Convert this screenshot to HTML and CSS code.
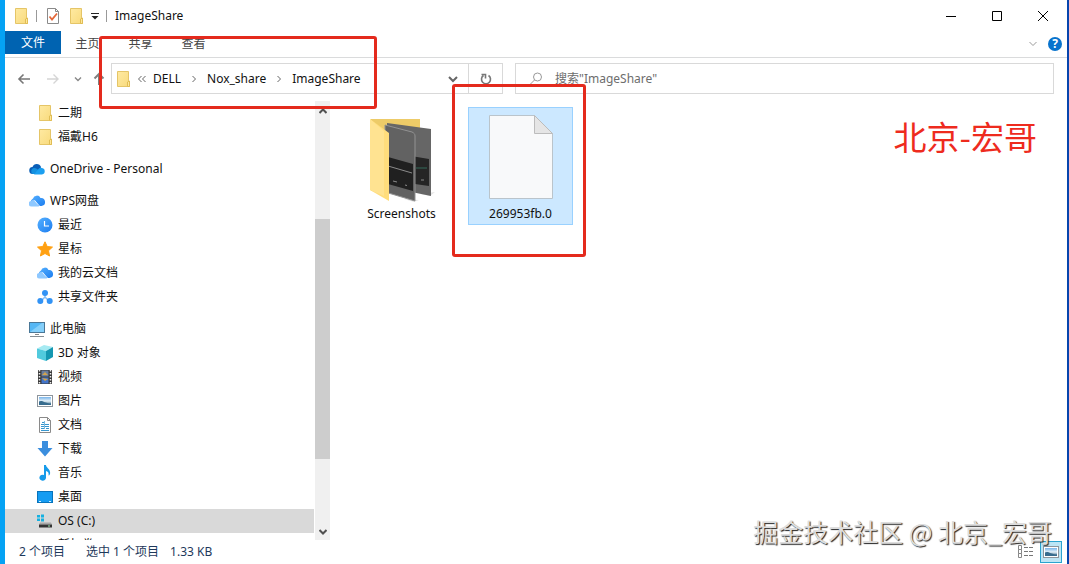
FILE: index.html
```html
<!DOCTYPE html>
<html lang="zh-CN">
<head>
  <meta charset="UTF-8" />
  <meta name="viewport" content="width=device-width, initial-scale=1" />
  <title>ImageShare</title>
  <link rel="stylesheet" href="styles.css">
</head>
<body>

  <!-- Shared icons -->
  <svg class="sprite" aria-hidden="true">
    <defs>
      <linearGradient id="folderFill" x1="0" y1="0" x2="1" y2="1">
        <stop offset="0" stop-color="#ffeaa2" />
        <stop offset="1" stop-color="#f8da7c" />
      </linearGradient>
      <linearGradient id="blueFill" x1="0" y1="0" x2="1" y2="1">
        <stop offset="0" stop-color="#55b0ff" />
        <stop offset="1" stop-color="#1c7df0" />
      </linearGradient>
      <linearGradient id="skyFill" x1="0" y1="0" x2="0" y2="1">
        <stop offset="0" stop-color="#78b4ea" />
        <stop offset="0.5" stop-color="#e4f1f8" />
        <stop offset="1" stop-color="#2c5f80" />
      </linearGradient>
    </defs>
    <symbol id="folder" viewBox="0 0 16 16">
      <path d="M2.500.500h11v10h1v5h-12z" fill="url(#folderFill)" stroke="#e5c567" />
      <path d="M12.500 15.500v-4.500l2-1v5.500z" fill="#ffe79a" stroke="#e0bd55" />
    </symbol>
    <symbol id="wpsCloud" viewBox="0 0 16 16">
      <path d="M5 13a4 4 0 0 1-1-7.500A4 4 0 0 1 11.500 5 4 4 0 0 1 12.500 13z" fill="url(#blueFill)" />
      <path d="M2.500 13.500a2.500 2.500 0 0 1 0-5.500 3 3 0 0 1 4-.500L10 13.500z" fill="#8ec8ff" />
      <path d="M5.500 7.500l5 5.500" stroke="#fff" stroke-width=".8" />
    </symbol>
    <symbol id="picture" viewBox="0 0 16 16">
      <rect x=".5" y="2.500" width="15" height="11" fill="#fff" stroke="#8d959c" />
      <rect x="2" y="4" width="12" height="8" fill="url(#skyFill)" />
      <path d="M2 8.500c3-2 5 1.500 12 2v1.500H2z" fill="#376c8e" />
    </symbol>
  </svg>

  <div class="window">
    <header class="titlebar">
      <svg class="icon"><use href="#folder" /></svg>
      <span class="divider"></span>
      <button class="plain" aria-label="属性">
        <svg class="icon" viewBox="0 0 16 16"><path d="M2.500.500h8l3 3v12h-11z" fill="#fff" stroke="#8a8a8a" /><path d="M10.500.500v3h3" fill="none" stroke="#8a8a8a" /><path d="M4.500 8.500l2.500 3 5-6" fill="none" stroke="#e4683a" stroke-width="1.800" /></svg>
      </button>
      <button class="plain" aria-label="新建文件夹"><svg class="icon"><use href="#folder" /></svg></button>
      <button class="plain" aria-label="自定义快速访问工具栏">
        <svg class="icon-small" viewBox="0 0 8 8"><path d="M0 1.500h8" stroke="#222" /><path d="M.5 4h7L4 7.500z" fill="#222" /></svg>
      </button>
      <span class="divider"></span>
      <h1 class="title">ImageShare</h1>
      <div class="window-buttons">
        <button class="plain" aria-label="最小化"><svg viewBox="0 0 10 10"><path d="M0 5.500h10" /></svg></button>
        <button class="plain" aria-label="最大化"><svg viewBox="0 0 10 10"><path d="M.5.500h9v9h-9z" /></svg></button>
        <button class="plain" aria-label="关闭"><svg viewBox="0 0 10 10"><path d="M0 0l10 10M10 0L0 10" /></svg></button>
      </div>
    </header>

    <nav class="ribbon">
      <button class="tab tab-file">文件</button>
      <button class="tab">主页</button>
      <button class="tab">共享</button>
      <button class="tab">查看</button>
      <div class="ribbon-end">
        <button class="plain" aria-label="展开功能区"><svg class="icon-small" viewBox="0 0 8 8"><path d="M.5 2L4 5.500 7.500 2" fill="none" stroke="#999" /></svg></button>
        <button class="help" aria-label="帮助">?</button>
      </div>
    </nav>

    <div class="addressbar">
      <div class="history">
        <button class="plain" aria-label="后退"><svg class="icon" viewBox="0 0 16 16"><path d="M14 8H3M7.500 3.500L3 8l4.500 4.500" fill="none" stroke="#777" stroke-width="1.600" /></svg></button>
        <button class="plain" aria-label="前进"><svg class="icon" viewBox="0 0 16 16"><path d="M2 8h11M8.500 3.500L13 8l-4.500 4.500" fill="none" stroke="#d5d5d5" stroke-width="1.400" /></svg></button>
        <button class="plain" aria-label="最近位置"><svg class="icon-small" viewBox="0 0 8 8"><path d="M1 2.500l3 3 3-3" fill="none" stroke="#888" stroke-width="1.400" /></svg></button>
        <button class="plain" aria-label="上移"><svg class="icon" viewBox="0 0 16 16"><path d="M8 14V3M3.500 7.500L8 3l4.500 4.500" fill="none" stroke="#808080" stroke-width="2" /></svg></button>
      </div>
      <div class="path">
        <svg class="icon"><use href="#folder" /></svg>
        <svg class="icon-path path-start" viewBox="0 0 10 10"><path d="M4.500 2l-3 3 3 3M8.500 2l-3 3 3 3" /></svg>
        <a href="#">DELL</a>
        <svg class="icon-path" viewBox="0 0 10 10"><path d="M3.500 2l3 3-3 3" /></svg>
        <a href="#">Nox_share</a>
        <svg class="icon-path" viewBox="0 0 10 10"><path d="M3.500 2l3 3-3 3" /></svg>
        <a href="#">ImageShare</a>
        <button class="plain path-more" aria-label="以前的位置"><svg class="icon-path" viewBox="0 0 10 10"><path d="M1 3l4 4 4-4" stroke-width="2" /></svg></button>
        <button class="plain refresh" aria-label="刷新"><svg class="icon" viewBox="0 0 16 16"><path d="M10.500 4.500A4.500 4.500 0 1 1 5.500 4.500M3.500 3.500h4v4" fill="none" stroke="#777" stroke-width="1.600" /></svg></button>
      </div>
      <label class="search">
        <svg class="icon" viewBox="0 0 16 16"><circle cx="9.500" cy="6" r="4" fill="none" stroke="#999" /><path d="M6.500 9L2 13.500" stroke="#999" /></svg>
        <input type="search" placeholder='搜索"ImageShare"' aria-label="搜索" />
      </label>
    </div>

    <main class="content">
      <aside class="sidebar">
        <ul class="tree">
          <li class="child"><a href="#"><svg class="icon"><use href="#folder" /></svg>二期</a></li>
          <li class="child"><a href="#"><svg class="icon"><use href="#folder" /></svg>福戴H6</a></li>
        </ul>
        <ul class="tree">
          <li><a href="#"><svg class="icon" viewBox="0 0 16 16"><path d="M4 13a3.500 3.500 0 0 1-.500-7A4.500 4.500 0 0 1 12 6l-2 7z" fill="#0a5fb8" /><path d="M3.500 13a3.500 3.500 0 0 1 1-6c2-.500 4 1 5 2l-1 4z" fill="#1490df" /><path d="M5 13.500l4.500-5.500a3.500 3.500 0 0 1 3.500-1 3.300 3.300 0 0 1 0 6.500z" fill="#1b9ff0" /></svg>OneDrive - Personal</a></li>
        </ul>
        <ul class="tree">
          <li><a href="#"><svg class="icon"><use href="#wpsCloud" /></svg>WPS网盘</a></li>
          <li class="child"><a href="#"><svg class="icon" viewBox="0 0 16 16"><circle cx="8" cy="8" r="7.500" fill="url(#blueFill)" /><path d="M7.500 4v5H12" fill="none" stroke="#fff" stroke-width="1.200" /></svg>最近</a></li>
          <li class="child"><a href="#"><svg class="icon" viewBox="0 0 16 16"><path d="M8 .8l2.200 4.700 5.300.6-4 3.600 1.100 5.300L8 12.500 3.400 15l1.100-5.300-4-3.600 5.300-.6z" fill="#ffa012" stroke="#ffa012" stroke-linejoin="round" /></svg>星标</a></li>
          <li class="child"><a href="#"><svg class="icon"><use href="#wpsCloud" /></svg>我的云文档</a></li>
          <li class="child"><a href="#"><svg class="icon" viewBox="0 0 16 16"><path d="M8 4v4l-4 4M8 8l4 4" fill="none" stroke="#84bdf5" stroke-width="1.500" /><circle cx="8" cy="4" r="3" fill="#3293f5" /><circle cx="3.300" cy="12" r="3" fill="#3293f5" /><circle cx="12.700" cy="12" r="3" fill="#3293f5" /></svg>共享文件夹</a></li>
        </ul>
        <ul class="tree">
          <li><a href="#"><svg class="icon" viewBox="0 0 16 16"><rect x=".5" y="1.500" width="15" height="10" fill="#55b7f5" stroke="#4a7797" /><path d="M1 11L13 2h2v9z" fill="#84cffa" /><path d="M6 13.500h4" stroke="#888" /><path d="M1 15.500h14" stroke="#858d93" /></svg>此电脑</a></li>
          <li class="child"><a href="#"><svg class="icon" viewBox="0 0 16 16"><path d="M0 3.500L7 0l9 2-7 4z" fill="#a6eaf2" /><path d="M0 3.500L9 6v10l-9-3z" fill="#51cadd" /><path d="M9 6l7-4v10l-7 4z" fill="#1597b1" /></svg>3D 对象</a></li>
          <li class="child"><a href="#"><svg class="icon" viewBox="0 0 16 16"><path d="M1 1h14v14H1z" fill="#393939" /><path d="M2.500 1v14M13.500 1v14" stroke="#eee" stroke-width="1.500" stroke-dasharray="1.500 1.500" /><path d="M4.500 1.500h7v6h-7z" fill="#687d9e" /><path d="M4.500 8.500h7v6h-7z" fill="#4374c8" /><path d="M5 6l3-3 3 3zM5 9l3 3 3-2z" fill="#d3a34a" /></svg>视频</a></li>
          <li class="child"><a href="#"><svg class="icon"><use href="#picture" /></svg>图片</a></li>
          <li class="child"><a href="#"><svg class="icon" viewBox="0 0 16 16"><path d="M2.500.500h8l3 3v12h-11z" fill="#fff" stroke="#8a8a8a" /><path d="M10.500.500v3h3" fill="none" stroke="#8a8a8a" /><path d="M5 5.500h3M4 7.500h8M4 9.500h8M4 11.500h3M9 11.500h3M4 13.500h8" stroke="#3897cf" /><path d="M7.500 4v8" stroke="#7abbe0" /></svg>文档</a></li>
          <li class="child"><a href="#"><svg class="icon" viewBox="0 0 16 16"><path d="M5 0h6v7h4.500L8 15.500.500 7H5z" fill="#3b8ede" /></svg>下载</a></li>
          <li class="child"><a href="#"><svg class="icon" viewBox="0 0 16 16"><path d="M7 0h2c0 3 5 4 4 9-.500 1-1 1.500-1.500 1.500C12 7.500 11 6.500 9 6v6.500a3.300 3 0 1 1-2-2.500z" fill="#169bea" /></svg>音乐</a></li>
          <li class="child"><a href="#"><svg class="icon" viewBox="0 0 16 16"><rect x=".5" y="2.500" width="15" height="11" fill="#159cf2" stroke="#0873bb" /><path d="M2 12.500h2M12 12.500h2" stroke="#d7f1ff" /></svg>桌面</a></li>
          <li class="child selected"><a href="#"><svg class="icon" viewBox="0 0 16 16"><path d="M0 2h3v2.500H0zM4 1.500h3v3H4zM0 5.500h3V8H0zM4 5.500h3v3H4z" fill="#16b1e1" /><path d="M3 9.500h11l1 2H2z" fill="#a7a7a7" /><path d="M2 11.500h13v3H2z" fill="#343434" /><path d="M11 13h2" stroke="#9ce8ae" /></svg>OS (C:)</a></li>
          <li class="child"><a href="#"><svg class="icon"></svg>新加卷 (D:)</a></li>
        </ul>
      </aside>
      <div class="scrollbar">
        <svg class="icon-small" viewBox="0 0 8 8"><path d="M.5 6L4 2.500 7.500 6" /></svg>
        <div class="thumb"></div>
        <svg class="icon-small" viewBox="0 0 8 8"><path d="M.5 2L4 5.500 7.500 2" /></svg>
      </div>

      <section class="files">
        <a class="file" href="#">
          <svg class="thumbnail" viewBox="0 0 84 87">
            <path d="M11 4h49v72H11z" fill="#edcb68" />
            <path d="M60 79l15-2-5 4zM44 84l15 1-5 2z" fill="#e6e6e6" />
            <path d="M27 8l44 6v67l-44-9z" fill="#666" />
            <path d="M27 37l42 7v27l-42-6z" fill="#252525" />
            <path d="M56 53h11" stroke="#356a5b" />
            <path d="M25 10l27 7c2 1 3 2 3 4v65l-30-9z" fill="#626262" stroke="#929292" />
            <path d="M28 42l25 7v27l-25-7z" fill="#202020" />
            <path d="M28 51l24 7M33 66l4 1M45 70l2 .500M61 65h3" stroke="#8a8a8a" />
            <path d="M10 4l19 14v68L10 75z" fill="#ffdd7c" />
            <path d="M10 4l14 12v65L10 75z" fill="#ffe391" />
          </svg>
          <span>Screenshots</span>
        </a>
        <a class="file file-selected" href="#">
          <svg class="thumbnail" viewBox="0 0 84 87">
            <path d="M10.500.500h45l18 18v65h-63z" fill="#f8f9fa" stroke="#bac4cb" />
            <path d="M55.500.500v18h18z" fill="#e5e5e5" stroke="#bcbcbc" />
          </svg>
          <span>269953fb.0</span>
        </a>
      </section>
    </main>

    <footer class="status">
      <span>2 个项目</span>
      <span>选中 1 个项目</span>
      <span>1.33 KB</span>
      <div class="views">
        <button class="plain" aria-label="详细信息"><svg class="icon" viewBox="0 0 16 16"><path d="M.5 1.500h3v4h-3zM.5 5.500h3v4h-3zM.5 9.500h3v4h-3z" fill="#fff" stroke="#888" /><path d="M6 3.500h4M11 3.500h4M6 7.500h4M11 7.500h4M6 11.500h4M11 11.500h4" stroke="#777" /></svg></button>
        <button class="plain view-active" aria-label="大图标"><svg class="icon"><use href="#picture" /></svg></button>
      </div>
    </footer>
  </div>

  <!-- Annotations over the window -->
  <div class="mark mark-path"></div>
  <div class="mark mark-file"></div>
  <p class="note">北京-宏哥</p>
  <p class="watermark">掘金技术社区 @ 北京_宏哥</p>

</body>
</html>
```
FILE: styles.css
```css
* {
  box-sizing: border-box;
}

body {
  position: relative;
  margin: 0;
  background-color: #fff;
  color: #111;
  font-family: "Noto Sans", "Noto Sans CJK SC", sans-serif;
  font-size: 12px;
  line-height: 24px;
}

button,
input {
  font: inherit;
  color: inherit;
}

a {
  color: inherit;
  text-decoration: none;
}

.sprite {
  position: absolute;
  width: 0;
  height: 0;
}

.window {
  display: flex;
  flex-direction: column;
  height: 100vh;
  border-left: 5px solid #05a2f4;
  border-right: 2px solid #0745ad;
}

.plain {
  display: flex;
  align-items: center;
  justify-content: center;
  padding: 0;
  border: none;
  background: none;
}

.icon {
  flex: none;
  width: 16px;
  height: 16px;
}

.icon-small {
  flex: none;
  width: 8px;
  height: 8px;
}

/* Title bar */
.titlebar {
  display: flex;
  flex: none;
  align-items: center;
  gap: 7px;
  height: 31px;
  padding-left: 8px;
}

.divider {
  width: 1px;
  height: 12px;
  margin-right: 1px;
  background-color: #999;
}

.title {
  margin: 0;
  font-size: 12px;
  font-weight: 400;
}

.window-buttons {
  display: flex;
  margin-right: 1px;
  margin-left: auto;
}

.window-buttons .plain {
  width: 46px;
  height: 30px;
}

.window-buttons svg {
  width: 10px;
  height: 10px;
  fill: none;
  stroke: #000;
}

/* Ribbon */
.ribbon {
  display: flex;
  flex: none;
  height: 27px;
  border-bottom: 1px solid #dadbdc;
}

.tab {
  width: 53px;
  height: 25px;
  padding: 0;
  border: none;
  background: none;
  color: #444;
}

.tab-file {
  width: 56px;
  height: 23px;
  background-color: #0063b1;
  color: #fff;
}

.ribbon-end {
  display: flex;
  align-items: center;
  gap: 11px;
  margin-left: auto;
  padding-right: 5px;
}

.help {
  width: 14px;
  height: 14px;
  padding: 0;
  border: none;
  border-radius: 50%;
  background-color: #0873cd;
  color: #fff;
  font-weight: 700;
  line-height: 14px;
}

/* Address row */
.addressbar {
  display: flex;
  flex: none;
  align-items: center;
  height: 43px;
  padding: 0 13px 2px 0;
}

.history {
  display: flex;
  flex: none;
  gap: 13px;
  width: 106px;
  padding-left: 11px;
}

.history .icon-small {
  margin-right: -4px;
}

.path {
  display: flex;
  flex: 387;
  align-items: center;
  gap: 8px;
  height: 31px;
  padding-left: 3px;
  border: 1px solid #d9d9d9;
}

.icon-path {
  flex: none;
  width: 10px;
  height: 10px;
  fill: none;
  stroke: #666;
}

.path .path-start {
  margin: 0 -2px;
}

.path-more {
  width: 30px;
  margin-left: auto;
}

.refresh {
  width: 34px;
  height: 100%;
  margin-left: -8px;
  border-left: 1px solid #d9d9d9;
}

.search {
  display: flex;
  flex: 525;
  align-items: center;
  gap: 11px;
  height: 31px;
  margin-left: 12px;
  padding-left: 12px;
  border: 1px solid #d9d9d9;
}

.search input {
  flex: 1;
  min-width: 0;
  padding: 0;
  border: none;
  outline: none;
  background: none;
}

.search input::placeholder {
  color: #6d6d6d;
}

/* Content */
.content {
  display: flex;
  flex: 1;
  min-height: 0;
}

.sidebar {
  flex: none;
  width: 310px;
  overflow: hidden;
}

.tree {
  margin: 0 0 8px;
  padding: 0;
  list-style: none;
}

.tree li {
  margin-right: 1px;
  padding-left: 24px;
}

.tree .child {
  padding-left: 32px;
}

.tree a {
  display: flex;
  align-items: center;
  gap: 5px;
  height: 24px;
}

.tree .selected {
  height: 24px;
  background-color: #d9d9d9;
}

.scrollbar {
  display: flex;
  flex: none;
  flex-direction: column;
  align-items: center;
  width: 15px;
  padding: 6px 0 4px;
  background-color: #f0f0f0;
}

.scrollbar path {
  fill: none;
  stroke: #505050;
  stroke-width: 2;
}

.thumb {
  width: 100%;
  height: 56%;
  margin: auto 0 69px;
  background-color: #cdcdcd;
}

.files {
  display: flex;
  flex: 1;
  align-items: flex-start;
  gap: 14px;
  padding: 6px 0 0 19px;
}

.file {
  display: flex;
  flex-direction: column;
  align-items: center;
  width: 105px;
  height: 118px;
  padding-top: 7px;
  border: 1px solid transparent;
}

.file-selected {
  border-color: #99d1ff;
  background-color: #cce8ff;
}

.thumbnail {
  flex: none;
  width: 84px;
  height: 87px;
}

/* Status bar */
.status {
  display: flex;
  flex: none;
  align-items: center;
  height: 24px;
  padding: 0 5px 0 14px;
  color: #1e395b;
}

.status span + span {
  margin-left: 21px;
}

.status span + span + span {
  margin-left: 11px;
}

.views {
  display: flex;
  gap: 3px;
  margin-left: auto;
}

.views .plain {
  width: 22px;
  height: 22px;
}

.views .view-active {
  border: 1px solid #2ba3cf;
  background-color: #bce5f5;
}

/* Annotations */
.mark {
  position: absolute;
  border: 3px solid #e42a1d;
  border-radius: 3px;
}

.mark-path {
  top: 36px;
  left: 99px;
  width: 278px;
  height: 73px;
}

.mark-file {
  top: 84px;
  left: 452px;
  width: 134px;
  height: 173px;
}

.note {
  position: absolute;
  top: 116px;
  right: 32px;
  margin: 0;
  color: #ee2b1e;
  font-family: "Noto Sans CJK SC", sans-serif;
  font-size: 33px;
  line-height: 40px;
}

.watermark {
  position: absolute;
  right: 17px;
  bottom: 17px;
  margin: 0;
  color: #ddd;
  font-family: "Noto Sans CJK SC", sans-serif;
  font-size: 25px;
  line-height: 32px;
  text-shadow: 1px 1px 1px #222;
}
```
